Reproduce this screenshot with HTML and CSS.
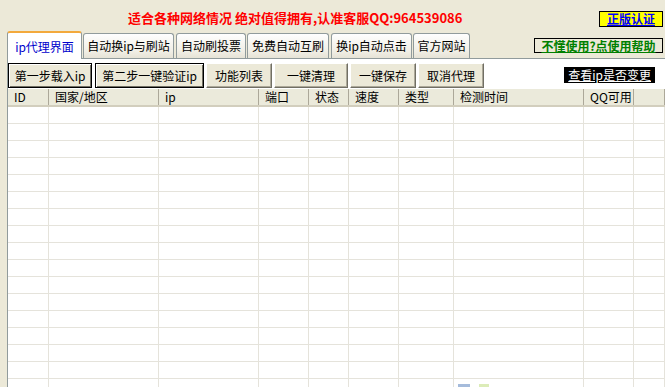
FILE: index.html
```html
<!DOCTYPE html>
<html lang="zh-CN">
<head>
    <meta charset="UTF-8">
    <title>ip代理界面</title>
    <link rel="stylesheet" href="styles.css">
</head>
<body>
    <div class="top">
        <div class="title">适合各种网络情况 绝对值得拥有,认准客服QQ:964539086</div>
        <a class="badge">正版认证</a>
    </div>

    <div class="tab-row">
        <div class="tab active">ip代理界面</div>
        <div class="tab">自动换ip与刷站</div>
        <div class="tab">自动刷投票</div>
        <div class="tab">免费自动互刷</div>
        <div class="tab">换ip自动点击</div>
        <div class="tab">官方网站</div>
        <a class="help">不懂使用?点使用帮助</a>
    </div>

    <div class="panel">
        <div class="toolbar">
            <button class="btn default">第一步载入ip</button>
            <button class="btn default">第二步一键验证ip</button>
            <button class="btn">功能列表</button>
            <button class="btn">一键清理</button>
            <button class="btn">一键保存</button>
            <button class="btn">取消代理</button>
            <a class="check">查看ip是否变更</a>
        </div>

        <div class="grid">
            <div class="head">
                <div>ID</div>
                <div>国家/地区</div>
                <div>ip</div>
                <div>端口</div>
                <div>状态</div>
                <div>速度</div>
                <div>类型</div>
                <div>检测时间</div>
                <div>QQ可用</div>
                <div></div>
            </div>
            <div id="rows"></div>
        </div>
    </div>

    <div class="corner">
        <span class="mark blue"></span>
        <span class="mark green"></span>
    </div>

    <script>
        // empty list rows
        const rows = document.getElementById('rows');
        for (let i = 0; i < 17; i++) {
            const row = document.createElement('div');
            row.classList.add('row');
            for (let c = 0; c < 10; c++) {
                row.appendChild(document.createElement('div'));
            }
            rows.appendChild(row);
        }
    </script>
</body>
</html>
```

FILE: styles.css
```css
body {
    margin: 0;
    width: 665px;
    height: 387px;
    overflow: hidden;
    position: relative;
    background-color: #ece9d8;
    font-family: "Noto Sans CJK SC", sans-serif;
    font-size: 12px;
    color: #000;
}

a {
    text-decoration: underline;
    cursor: pointer;
}

.top {
    display: flex;
    align-items: center;
    height: 31px;
    padding-left: 128px;
}

.title {
    color: #f00;
    font-weight: bold;
    font-size: 13px;
    line-height: 15px;
    padding-top: 4px;
}

.badge {
    margin-left: auto;
    margin-right: 2px;
    margin-top: 6px;
    width: 62px;
    height: 14px;
    line-height: 14px;
    text-align: center;
    border: 1px solid #000;
    background: #ff0;
    color: #00f;
    font-weight: bold;
    font-size: 12px;
}

.tab-row {
    display: flex;
    align-items: flex-end;
    height: 27px;
    padding-left: 7px;
}

.tab {
    box-sizing: border-box;
    height: 25px;
    line-height: 23px;
    margin-right: 1px;
    text-align: center;
    border: 1px solid #919b9c;
    border-bottom: none;
    border-radius: 3px 3px 0 0;
    background: linear-gradient(#fefefe, #f1efe6 70%, #e6e3d6);
    white-space: nowrap;
}

.tab.active {
    height: 28px;
    line-height: 27px;
    margin-bottom: -1px;
    border-top: 2px solid #f3a93c;
    background: #fff;
    color: #0000cc;
    position: relative;
}

.tab:nth-child(1) { width: 75px; }
.tab:nth-child(2) { width: 91px; }
.tab:nth-child(3) { width: 70px; margin-left: 1px; }
.tab:nth-child(4) { width: 82px; }
.tab:nth-child(5) { width: 81px; margin-left: 1px; }
.tab:nth-child(6) { width: 57px; }

.help {
    align-self: center;
    margin-left: auto;
    margin-right: 2px;
    margin-top: 2px;
    width: 127px;
    height: 13px;
    line-height: 13px;
    text-align: center;
    border: 1px solid #000;
    color: #008000;
    font-weight: bold;
    font-size: 12px;
    white-space: nowrap;
}

.panel {
    margin-left: 7px;
    border-left: 1px solid #919b9c;
    border-top: 1px solid #919b9c;
    background: #fff;
    height: 340px;
}

.toolbar {
    box-sizing: border-box;
    display: flex;
    align-items: flex-start;
    height: 30px;
    padding-top: 4px;
}

.btn {
    box-sizing: border-box;
    height: 25px;
    margin-right: 2px;
    padding: 0;
    font-family: inherit;
    font-size: 12px;
    color: #000;
    background: #ece9d8;
    border: 1px solid;
    border-color: #fff #716f64 #716f64 #fff;
    box-shadow: inset -1px -1px 0 #aca899;
}

.btn.default {
    border: 1px solid #000;
    box-shadow: inset 1px 1px 0 #fff, inset -1px -1px 0 #716f64;
}

.btn:nth-child(1) { width: 84px; margin-right: 3px; }
.btn:nth-child(2) { width: 109px; }
.btn:nth-child(3) { width: 66px; }
.btn:nth-child(4) { width: 74px; }
.btn:nth-child(5) { width: 66px; }
.btn:nth-child(6) { width: 66px; }

.check {
    margin-left: auto;
    margin-right: 10px;
    margin-top: 4px;
    padding: 0 4px;
    height: 16px;
    line-height: 16px;
    background: #000;
    color: #fff;
    font-size: 12px;
}

.head,
.row {
    display: grid;
    grid-template-columns: 41px 110px 100px 50px 40px 50px 55px 130px 50px 1fr;
}

.head {
    height: 16px;
    background: #ebeadb;
    border-bottom: 2px solid #d2cebd;
}

.head div {
    line-height: 16px;
    padding-left: 6px;
    border-right: 1px solid #aca899;
    white-space: nowrap;
}

.row {
    box-sizing: border-box;
    height: 17px;
    border-bottom: 1px solid #e5e3db;
}

.row div {
    border-right: 1px solid #e5e3db;
}

.corner {
    position: absolute;
    left: 458px;
    top: 384px;
    display: flex;
    gap: 9px;
    opacity: 0.6;
}

.mark {
    display: block;
    width: 12px;
    height: 3px;
}

.mark.blue { background: #6a8ec4; }
.mark.green { background: #c6e08a; width: 10px; }
```
